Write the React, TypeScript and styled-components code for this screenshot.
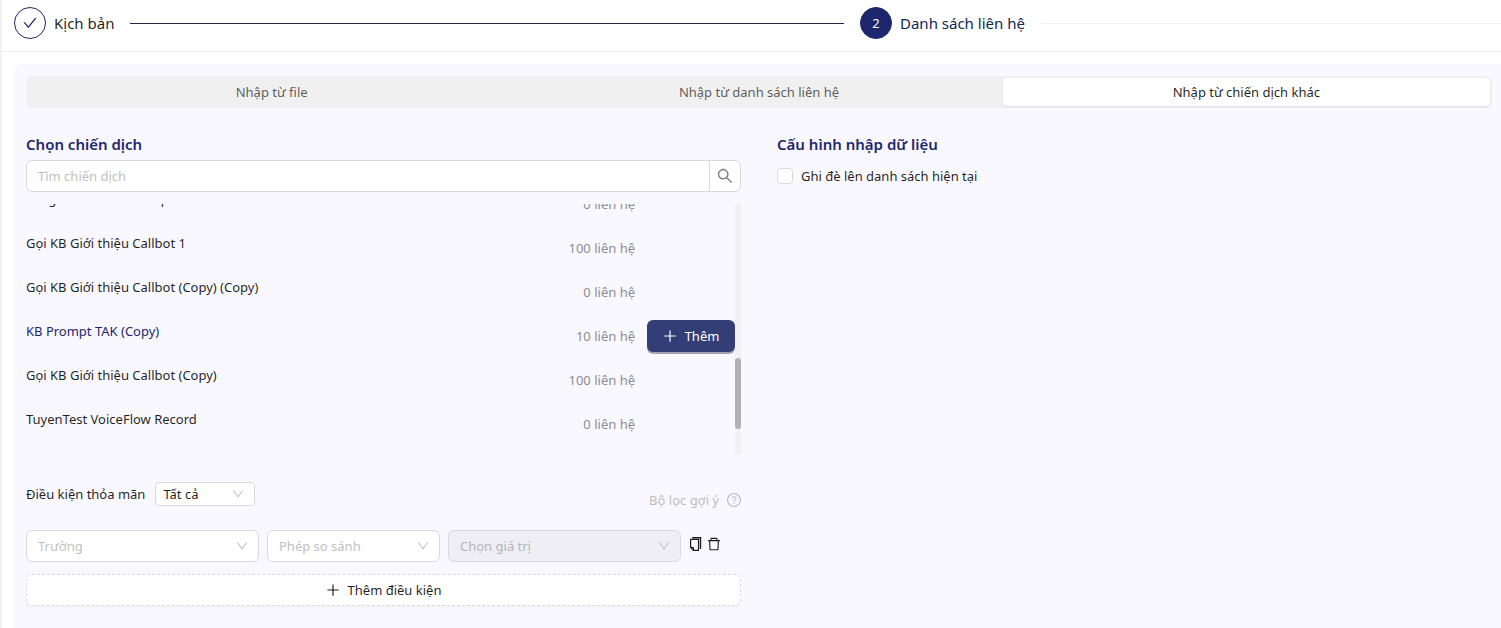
import React from "react";
import styled, { createGlobalStyle } from "styled-components";
import {
  AiOutlineCheck,
  AiOutlineDelete,
  AiOutlineDown,
  AiOutlinePlus,
  AiOutlineQuestionCircle,
  AiOutlineSearch,
} from "react-icons/ai";

const GlobalStyle = createGlobalStyle`
  *, *::before, *::after { box-sizing: border-box; }
  body {
    margin: 0;
    background: #ffffff;
    color: rgba(0, 0, 0, 0.88);
    font-family: "Noto Sans", "Open Sans", sans-serif;
    font-size: 13px;
    line-height: 22px;
  }
  button, input, select { font: inherit; color: inherit; margin: 0; }
`;

// Trims the built-in margin of the icon set's 1024-unit grid.
const ICON_BOX = "64 64 896 896";

const Page = styled.div`
  display: flex;
  flex-direction: column;
  min-height: 100vh;
  border-left: 2px solid #f2f2f2;
  overflow: hidden;
`;

const Steps = styled.ol`
  display: grid;
  grid-template-columns: 846fr 641fr;
  margin: 0;
  padding: 7px 0 12px 12px;
  list-style: none;
  border-bottom: 1px solid #eeeeee;
`;

const Step = styled.li<{ $line: string }>`
  display: flex;
  align-items: center;
  gap: 8px;
  font-size: 15px;
  white-space: nowrap;

  &::after {
    content: "";
    flex: 1;
    height: 1px;
    margin: 0 16px 0 8px;
    background: ${(p) => p.$line};
  }
  &:last-child::after { margin-right: 0; }
`;

const StepIcon = styled.span<{ $active?: boolean }>`
  display: flex;
  align-items: center;
  justify-content: center;
  width: 32px;
  height: 32px;
  border: 1px solid #1f2a6b;
  border-radius: 50%;
  background: ${(p) => (p.$active ? "#1e266d" : "#ffffff")};
  color: ${(p) => (p.$active ? "#ffffff" : "#1e266d")};
  font-size: ${(p) => (p.$active ? "13px" : "14px")};
`;

const StepTitle = styled.span<{ $active?: boolean }>`
  color: ${(p) => (p.$active ? "#0d2a56" : "rgba(0, 0, 0, 0.88)")};
`;

const Panel = styled.main`
  flex: 1;
  margin: 12px 0 0 11px;
  padding: 12px 9px 22px 13px;
  border-radius: 8px 0 0 0;
  background: #f9f8ff;
`;

const Tabs = styled.div`
  display: grid;
  grid-template-columns: repeat(3, 1fr);
  padding: 2px;
  border-radius: 6px;
  background: #f0f0f0;
`;

const Tab = styled.button<{ $selected?: boolean }>`
  height: 28px;
  padding: 0 12px;
  border: 0;
  border-radius: 4px;
  background: ${(p) => (p.$selected ? "#ffffff" : "transparent")};
  box-shadow: ${(p) => (p.$selected ? "0 1px 2px rgba(0, 0, 0, 0.08)" : "none")};
  color: ${(p) => (p.$selected ? "rgba(0, 0, 0, 0.88)" : "rgba(0, 0, 0, 0.65)")};
  cursor: pointer;
`;

const Columns = styled.div`
  display: grid;
  grid-template-columns: 1fr 1fr;
  gap: 36px;
  margin-top: 24px;
`;

const Heading = styled.h2`
  margin: 0 0 4px;
  color: #1e266d;
  font-size: 15px;
  font-weight: 600;
  line-height: 24px;
`;

const SearchBox = styled.form`
  display: flex;
  height: 32px;
  border: 1px solid #d9d9d9;
  border-radius: 6px;
  background: #ffffff;
  overflow: hidden;
`;

const SearchInput = styled.input`
  flex: 1;
  min-width: 0;
  padding: 0 11px;
  border: 0;
  outline: 0;
  background: transparent;
  &::placeholder { color: #bfbfbf; }
`;

const SearchButton = styled.button`
  display: flex;
  align-items: center;
  justify-content: center;
  width: 31px;
  padding: 0;
  border: 0;
  border-left: 1px solid #d9d9d9;
  background: transparent;
  color: rgba(0, 0, 0, 0.5);
  font-size: 16px;
`;

const Scroller = styled.div`
  display: flex;
  height: 250px;
  margin-top: 12px;
  overflow: hidden;
`;

const CampaignList = styled.ul`
  flex: 1;
  margin: -22px 0 0;
  padding: 0;
  list-style: none;
`;

const CampaignRow = styled.li`
  display: grid;
  grid-template-columns: 1fr auto 88px;
  column-gap: 12px;
  height: 44px;
  padding: 6px 0;
  line-height: 32px;
`;

const CampaignName = styled.span<{ $active?: boolean }>`
  line-height: 22px;
  color: ${(p) => (p.$active ? "#1e266d" : "inherit")};
`;

const CampaignCount = styled.span`
  color: #8c8c91;
`;

const AddButton = styled.button`
  display: flex;
  align-items: center;
  justify-content: center;
  gap: 8px;
  height: 32px;
  padding: 0;
  border: 0;
  border-radius: 6px;
  background: #343e76;
  box-shadow: 0 2px 0 #a3a3b8;
  color: #ffffff;
`;

const ScrollTrack = styled.div`
  width: 6px;
  background: #f1f1f1;
`;

const ScrollThumb = styled.div`
  height: 71px;
  margin-top: 154px;
  border-radius: 3px;
  background: #b1b1b1;
`;

const MatchBar = styled.div`
  display: flex;
  justify-content: space-between;
  margin-top: 28px;
`;

const MatchLabel = styled.label`
  display: flex;
  align-items: center;
  gap: 10px;
  height: 24px;
`;

const Hint = styled.span`
  display: flex;
  align-items: center;
  gap: 8px;
  height: 36px;
  color: #bdbdc2;
  svg { font-size: 14px; }
`;

const SelectShell = styled.span<{ $small?: boolean }>`
  display: grid;
  align-items: center;
  width: ${(p) => (p.$small ? "100px" : "auto")};

  > * { grid-area: 1 / 1; }
  svg {
    justify-self: end;
    margin-right: 11px;
    font-size: 12px;
    color: #bfbfbf;
    pointer-events: none;
  }
`;

const SelectBox = styled.select<{ $small?: boolean }>`
  width: 100%;
  height: ${(p) => (p.$small ? "24px" : "32px")};
  padding: ${(p) => (p.$small ? "0 24px 0 7px" : "0 28px 0 11px")};
  appearance: none;
  border: 1px solid #d9d9d9;
  border-radius: ${(p) => (p.$small ? "4px" : "6px")};
  background: #ffffff;
  color: ${(p) => (p.$small ? "inherit" : "#bfbfbf")};
  opacity: 1;

  &:disabled { background: #efeef4; color: #b5b5ba; }
`;

const ConditionRow = styled.div`
  display: grid;
  grid-template-columns: 233fr 173fr 233fr 52px;
  column-gap: 8px;
  margin-top: 12px;
`;

const RowActions = styled.div`
  display: flex;
  gap: 4px;
  height: 28px;
  align-items: center;
`;

const IconButton = styled.button`
  display: flex;
  padding: 0;
  border: 0;
  background: transparent;
  font-size: 14px;
`;

const DashedButton = styled.button`
  display: flex;
  align-items: center;
  justify-content: center;
  gap: 8px;
  width: 100%;
  height: 32px;
  margin-top: 12px;
  border: 1px dashed #d9d9d9;
  border-radius: 6px;
  background: #ffffff;
  box-shadow: 0 2px 0 rgba(0, 0, 0, 0.02);
`;

const CheckLabel = styled.label`
  display: flex;
  align-items: center;
  gap: 8px;
  height: 32px;
`;

const CheckBox = styled.input`
  width: 16px;
  height: 16px;
  appearance: none;
  border: 1px solid #d9d9d9;
  border-radius: 4px;
  background: #ffffff;
  &:checked { background: #1e266d; }
`;

const DuplicateIcon = () => (
  <svg width="14" height="14" viewBox="0 0 14 14" fill="none" stroke="currentColor" aria-hidden="true">
    <path d="M1.6 2.4h7.9v10.9h-5l-2.9-2.8z" strokeWidth="1.2" />
    <path d="M1.6 10.4h2.9v2.9" />
    <path d="M3.2 .8h8.3v11.2" strokeWidth="1.4" />
  </svg>
);

const campaigns = [
  { name: "Tổng đài Callbot Prompt", count: 0 },
  { name: "Gọi KB Giới thiệu Callbot 1", count: 100 },
  { name: "Gọi KB Giới thiệu Callbot (Copy) (Copy)", count: 0 },
  { name: "KB Prompt TAK (Copy)", count: 10, active: true },
  { name: "Gọi KB Giới thiệu Callbot (Copy)", count: 100 },
  { name: "TuyenTest VoiceFlow Record", count: 0 },
];

type SelectProps = { label?: string; text: string; small?: boolean; disabled?: boolean };

const Select = ({ label, text, small, disabled }: SelectProps) => (
  <SelectShell $small={small}>
    <SelectBox $small={small} aria-label={label} disabled={disabled}>
      <option>{text}</option>
    </SelectBox>
    <AiOutlineDown viewBox={ICON_BOX} aria-hidden="true" />
  </SelectShell>
);

export default function App() {
  return (
    <Page>
      <GlobalStyle />
      <Steps>
        <Step $line="#1f2547">
          <StepIcon><AiOutlineCheck viewBox={ICON_BOX} /></StepIcon>
          <StepTitle>Kịch bản</StepTitle>
        </Step>
        <Step $line="#f0f0f0" aria-current="step">
          <StepIcon $active>2</StepIcon>
          <StepTitle $active>Danh sách liên hệ</StepTitle>
        </Step>
      </Steps>
      <Panel>
        <Tabs role="tablist">
          <Tab role="tab" aria-selected={false}>Nhập từ file</Tab>
          <Tab role="tab" aria-selected={false}>Nhập từ danh sách liên hệ</Tab>
          <Tab role="tab" aria-selected $selected>Nhập từ chiến dịch khác</Tab>
        </Tabs>
        <Columns>
          <section>
            <Heading>Chọn chiến dịch</Heading>
            <SearchBox role="search" onSubmit={(e) => e.preventDefault()}>
              <SearchInput placeholder="Tìm chiến dịch" aria-label="Tìm chiến dịch" />
              <SearchButton aria-label="Tìm"><AiOutlineSearch viewBox={ICON_BOX} /></SearchButton>
            </SearchBox>
            <Scroller>
              <CampaignList>
                {campaigns.map((c) => (
                  <CampaignRow key={c.name}>
                    <CampaignName $active={c.active}>{c.name}</CampaignName>
                    <CampaignCount>{c.count} liên hệ</CampaignCount>
                    {c.active && (
                      <AddButton><AiOutlinePlus viewBox={ICON_BOX} size={14} />Thêm</AddButton>
                    )}
                  </CampaignRow>
                ))}
              </CampaignList>
              <ScrollTrack><ScrollThumb /></ScrollTrack>
            </Scroller>
            <MatchBar>
              <MatchLabel>
                Điều kiện thỏa mãn
                <Select text="Tất cả" small />
              </MatchLabel>
              <Hint>Bộ lọc gợi ý<AiOutlineQuestionCircle viewBox={ICON_BOX} /></Hint>
            </MatchBar>
            <ConditionRow>
              <Select label="Trường" text="Trường" />
              <Select label="Phép so sánh" text="Phép so sánh" />
              <Select label="Chọn giá trị" text="Chọn giá trị" disabled />
              <RowActions>
                <IconButton aria-label="Sao chép"><DuplicateIcon /></IconButton>
                <IconButton aria-label="Xóa"><AiOutlineDelete viewBox={ICON_BOX} /></IconButton>
              </RowActions>
            </ConditionRow>
            <DashedButton><AiOutlinePlus viewBox={ICON_BOX} size={14} />Thêm điều kiện</DashedButton>
          </section>
          <section>
            <Heading>Cấu hình nhập dữ liệu</Heading>
            <CheckLabel>
              <CheckBox type="checkbox" />
              Ghi đè lên danh sách hiện tại
            </CheckLabel>
          </section>
        </Columns>
      </Panel>
    </Page>
  );
}
